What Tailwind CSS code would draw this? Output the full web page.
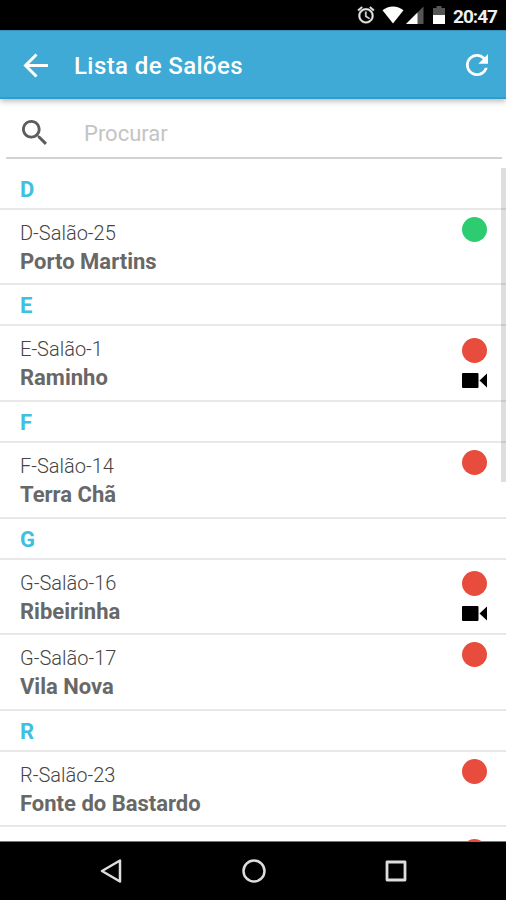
<!DOCTYPE html>
<html lang="pt">
<head>
    <meta charset="UTF-8">
    <meta name="viewport" content="width=device-width, initial-scale=1.0">
    <title>Lista de Salões</title>
    <script src="https://cdn.jsdelivr.net/npm/@tailwindcss/browser@4"></script>
    <style>
        body {
            font-family: Roboto, 'Liberation Sans', sans-serif;
        }
    </style>
</head>
<body class="bg-white">
    <div class="w-[506px] h-[900px] flex flex-col overflow-hidden">

        <!-- Status bar -->
        <div class="h-[30px] shrink-0 bg-black flex items-center justify-end pr-2.5 text-white">
            <svg class="w-5 h-5 mr-1.5" viewBox="0 0 24 24" fill="#e4e4e4" stroke="#e4e4e4" stroke-width=".5"><path d="M22 5.72l-4.6-3.86-1.29 1.53 4.6 3.86L22 5.72zM7.88 3.39L6.6 1.86 2 5.71l1.29 1.53 4.59-3.85zM12.5 8H11v6l4.75 2.85.75-1.23-4-2.37V8zM12 4c-4.97 0-9 4.03-9 9s4.02 9 9 9c4.97 0 9-4.03 9-9s-4.03-9-9-9zm0 16c-3.87 0-7-3.13-7-7s3.13-7 7-7 7 3.13 7 7-3.13 7-7 7z"/></svg>
            <svg class="w-[22px] h-[18px] mr-0.5" viewBox="0 0 22 18" fill="#fff"><path d="M11 17.500.5 4.300C3.500 1.800 7 .5 11 .5s7.500 1.300 10.500 3.800z"/></svg>
            <svg class="w-[18px] h-[18px] mr-[9px]" viewBox="0 0 18 18"><path d="M0 18 17.500.5V18z" fill="#555"/><path d="M0 18 11.500 6.500V18z" fill="#fff"/></svg>
            <svg class="w-3 h-[18px] mr-[8px]" viewBox="0 0 12 18"><path d="M3.500 0h5v2H12v7H0V2h3.500z" fill="#555"/><path d="M0 9h12v9H0z" fill="#fff"/></svg>
            <span class="text-[19px] leading-none font-bold mt-0.5 tracking-[-1px] w-[43px] text-[#eee]">20:47</span>
        </div>

        <!-- Toolbar -->
        <div class="h-[69px] shrink-0 bg-[#3eaad5] border-t border-t-[#3490b6] border-b-2 border-b-[#2f9dcb] flex items-center pl-[23px] pr-[18px] relative z-10 shadow-[0_2px_6px_rgba(0,0,0,0.3)]">
            <svg class="w-[25px] h-[25px] mt-0.5" viewBox="0 0 25 25" fill="none" stroke="#fff" stroke-width="3"><path d="M13.500 1.500 2.500 12.500l11 11M2.500 12.500H25"/></svg>
            <h1 class="ml-[26px] mt-1 flex-1 text-white text-[24px] leading-none font-medium tracking-[0.4px]">Lista de Salões</h1>
            <svg class="w-[22px] h-[22px] mt-px" viewBox="4 4 16 16" fill="#fff"><path d="M17.650 6.350C16.200 4.900 14.210 4 12 4c-4.420 0-7.990 3.580-7.990 8s3.570 8 7.990 8c3.730 0 6.840-2.550 7.730-6h-2.080c-.82 2.330-3.040 4-5.650 4-3.310 0-6-2.690-6-6s2.690-6 6-6c1.660 0 3.140.69 4.220 1.780L13 11h7V4l-2.350 2.350z"/></svg>
        </div>

        <!-- Search -->
        <div class="h-[60px] shrink-0 mx-1.5 mr-1 border-b-2 border-[#d2d2d2] flex items-center pl-4 pt-[8px]">
            <svg class="w-[25px] h-[25px]" viewBox="3 3 17.490 17.490" fill="#5c5c5c"><path d="M15.500 14h-.79l-.28-.27C15.410 12.590 16 11.110 16 9.500 16 5.910 13.090 3 9.500 3S3 5.910 3 9.500 5.910 16 9.500 16c1.610 0 3.090-.59 4.230-1.570l.27.28v.79l5 4.990L20.490 19l-4.990-5zm-6 0C7.010 14 5 11.990 5 9.500S7.010 5 9.500 5 14 7.010 14 9.500 11.990 14 9.500 14z"/></svg>
            <span class="ml-[37px] mt-[3px] text-[22px] leading-none text-[#c4c4c4]">Procurar</span>
        </div>

        <!-- List -->
        <div class="flex-1 min-h-0 overflow-hidden relative pt-[9.500px]">
            <div class="h-[41.300px] border-b-2 border-[#e8e8e8] pl-5 pt-[9px] text-[22px] leading-6 font-bold text-[#3fc0e0]">D</div>
            <div class="h-[75.400px] border-b-2 border-[#e8e8e8] pl-5 pr-[19px] flex justify-between">
                <div class="pt-[9px]">
                    <p class="text-[20px] leading-[29px] font-light text-[#444]">D-Salão-25</p>
                    <p class="text-[22px] leading-7 font-bold text-[#686868]">Porto Martins</p>
                </div>
                <div class="pt-[7px]">
                    <div class="w-[25px] h-[25px] rounded-full bg-[#2ecc71]"></div>
                </div>
            </div>

            <div class="h-[41.300px] border-b-2 border-[#e8e8e8] pl-5 pt-[9px] text-[22px] leading-6 font-bold text-[#3fc0e0]">E</div>
            <div class="h-[75.400px] border-b-2 border-[#e8e8e8] pl-5 pr-[19px] flex justify-between">
                <div class="pt-[9px]">
                    <p class="text-[20px] leading-[29px] font-light text-[#444]">E-Salão-1</p>
                    <p class="text-[22px] leading-7 font-bold text-[#686868]">Raminho</p>
                </div>
                <div class="pt-[11.500px]">
                    <div class="w-[25px] h-[25px] rounded-full bg-[#e74c3c]"></div>
                    <svg class="w-[25px] h-[15px] mt-2.5" viewBox="0 0 25 15"><rect width="16.500" height="15" rx="1"/><path d="M17.500 7.500 25 .5v14z"/></svg>
                </div>
            </div>

            <div class="h-[41.300px] border-b-2 border-[#e8e8e8] pl-5 pt-[9px] text-[22px] leading-6 font-bold text-[#3fc0e0]">F</div>
            <div class="h-[75.400px] border-b-2 border-[#e8e8e8] pl-5 pr-[19px] flex justify-between">
                <div class="pt-[9px]">
                    <p class="text-[20px] leading-[29px] font-light text-[#444]">F-Salão-14</p>
                    <p class="text-[22px] leading-7 font-bold text-[#686868]">Terra Chã</p>
                </div>
                <div class="pt-[7px]">
                    <div class="w-[25px] h-[25px] rounded-full bg-[#e74c3c]"></div>
                </div>
            </div>

            <div class="h-[41.300px] border-b-2 border-[#e8e8e8] pl-5 pt-[9px] text-[22px] leading-6 font-bold text-[#3fc0e0]">G</div>
            <div class="h-[75.400px] border-b-2 border-[#e8e8e8] pl-5 pr-[19px] flex justify-between">
                <div class="pt-[9px]">
                    <p class="text-[20px] leading-[29px] font-light text-[#444]">G-Salão-16</p>
                    <p class="text-[22px] leading-7 font-bold text-[#686868]">Ribeirinha</p>
                </div>
                <div class="pt-[11.500px]">
                    <div class="w-[25px] h-[25px] rounded-full bg-[#e74c3c]"></div>
                    <svg class="w-[25px] h-[15px] mt-2.5" viewBox="0 0 25 15"><rect width="16.500" height="15" rx="1"/><path d="M17.500 7.500 25 .5v14z"/></svg>
                </div>
            </div>
            <div class="h-[75.400px] border-b-2 border-[#e8e8e8] pl-5 pr-[19px] flex justify-between">
                <div class="pt-[9px]">
                    <p class="text-[20px] leading-[29px] font-light text-[#444]">G-Salão-17</p>
                    <p class="text-[22px] leading-7 font-bold text-[#686868]">Vila Nova</p>
                </div>
                <div class="pt-[7px]">
                    <div class="w-[25px] h-[25px] rounded-full bg-[#e74c3c]"></div>
                </div>
            </div>

            <div class="h-[41.300px] border-b-2 border-[#e8e8e8] pl-5 pt-[9px] text-[22px] leading-6 font-bold text-[#3fc0e0]">R</div>
            <div class="h-[75.400px] border-b-2 border-[#e8e8e8] pl-5 pr-[19px] flex justify-between">
                <div class="pt-[9px]">
                    <p class="text-[20px] leading-[29px] font-light text-[#444]">R-Salão-23</p>
                    <p class="text-[22px] leading-7 font-bold text-[#686868]">Fonte do Bastardo</p>
                </div>
                <div class="pt-[7px]">
                    <div class="w-[25px] h-[25px] rounded-full bg-[#e74c3c]"></div>
                </div>
            </div>
            <div class="pr-[19px] pt-[11.500px] flex justify-end">
                <div class="w-[25px] h-[25px] rounded-full bg-[#e74c3c]"></div>
            </div>

            <!-- Scrollbar thumb -->
            <div class="absolute right-0 top-[9px] w-[5px] h-[314px] bg-black/13"></div>
        </div>

        <!-- Navigation bar -->
        <div class="h-[59px] shrink-0 bg-black border-t border-[#777] flex items-center justify-between pl-[100px] pr-[99px]">
            <svg class="w-[22px] h-6" viewBox="0 0 22 24" fill="none" stroke="#ddd" stroke-width="2.500" stroke-linejoin="round"><path d="M20 1.500v21L2 12z"/></svg>
            <svg class="w-6 h-6" viewBox="0 0 24 24" fill="none" stroke="#ddd" stroke-width="2.500"><circle cx="12" cy="12" r="10.500"/></svg>
            <svg class="w-[22px] h-[22px]" viewBox="0 0 22 22" fill="none" stroke="#ddd" stroke-width="2.800" stroke-linejoin="round"><path d="M2 2h18v18H2z"/></svg>
        </div>
    </div>
</body>
</html>
